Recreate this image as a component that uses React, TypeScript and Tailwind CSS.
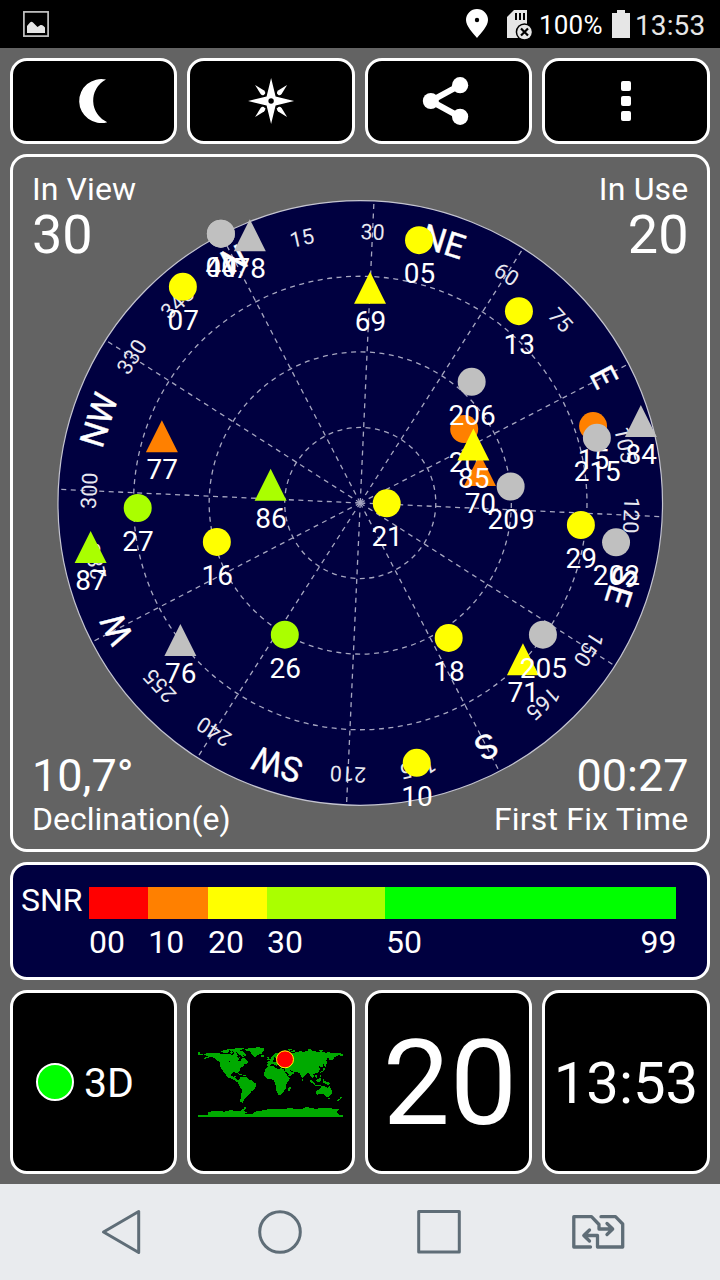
import React from "react";

type Shape = "circle" | "triangle";
type Satellite = [id: string, shape: Shape, x: number, y: number, color: string];

const YELLOW = "#ffff00";
const LIME = "#aaff00";
const ORANGE = "#ff8000";
const GRAY = "#c0c0c0";

const CX = 360.5;
const CY = 503;
const R = 302.5;
const HEADING = 27.4;

const satellites: Satellite[] = [
  ["04", "circle", 221, 233.5, GRAY],
  ["40", "circle", 221, 233.5, GRAY],
  ["78", "triangle", 250, 235, GRAY],
  ["05", "circle", 419.3, 240, YELLOW],
  ["07", "circle", 183, 286.7, YELLOW],
  ["69", "triangle", 370.3, 287.7, YELLOW],
  ["13", "circle", 519.3, 311, YELLOW],
  ["20", "circle", 464.5, 429, ORANGE],
  ["206", "circle", 472, 381.7, GRAY],
  ["70", "triangle", 480.3, 470, ORANGE],
  ["85", "triangle", 473.7, 444.5, YELLOW],
  ["209", "circle", 511, 486.5, GRAY],
  ["15", "circle", 593.5, 426, ORANGE],
  ["215", "circle", 597.3, 437.8, GRAY],
  ["84", "triangle", 641.3, 421, GRAY],
  ["21", "circle", 387, 503.3, YELLOW],
  ["29", "circle", 581.3, 525, YELLOW],
  ["202", "circle", 616.5, 542.3, GRAY],
  ["71", "triangle", 523.3, 659.3, YELLOW],
  ["205", "circle", 543.3, 634.8, GRAY],
  ["18", "circle", 449, 638, YELLOW],
  ["10", "circle", 417, 763, YELLOW],
  ["26", "circle", 285, 634.8, LIME],
  ["16", "circle", 217, 542, YELLOW],
  ["76", "triangle", 180.5, 640, GRAY],
  ["86", "triangle", 270.8, 484.7, LIME],
  ["27", "circle", 137.8, 508, LIME],
  ["87", "triangle", 90.7, 547, LIME],
  ["77", "triangle", 162, 436.3, ORANGE],
];

const marks = [
  "N", "15", "30", "NE", "60", "75", "E", "105", "120", "SE", "150", "165",
  "S", "195", "210", "SW", "240", "255", "W", "285", "300", "NW", "330", "345",
];

const spokes = [0, 30, 60, 90, 120, 150, 180, 210, 240, 270, 300, 330];

const scale = [
  { label: "00", cls: "w-[59.3px] bg-[#ff0000]" },
  { label: "10", cls: "w-[59.7px] bg-[#ff8000]" },
  { label: "20", cls: "w-[59px] bg-[#ffff00]" },
  { label: "30", cls: "w-[118px] bg-[#aaff00]" },
  { label: "50", cls: "w-[291.5px] bg-[#00ff00]" },
];

const card = "rounded-[17px] border-[3px] border-white overflow-hidden";

function StatusBar() {
  return (
    <header className="flex h-12 shrink-0 items-center bg-black text-[#e6e6e6]">
      <svg className="ml-[23px]" width="26" height="26" viewBox="23 11 26 26">
        <rect x="23.9" y="11.9" width="24.2" height="24.2" fill="none" stroke="#c6c6c6" strokeWidth="1.7" />
        <path d="M27 33V26L30 22.5Q31.500 21 33 22.500L37.500 27L40.500 25Q42 24.500 43.500 26L45 27.500V33Z" fill="#e6e6e6" />
      </svg>
      <svg className="ml-[417px]" width="22" height="48" viewBox="466 0 22 48">
        <path d="M477 9a11 11 0 0 0-11 11c0 6 7 13 11 18 4-5 11-12 11-18a11 11 0 0 0-11-11Z" fill="#fff" />
        <circle cx="477" cy="20" r="2.200" fill="#000" />
      </svg>
      <svg className="ml-[19px]" width="26" height="48" viewBox="507 0 26 48">
        <path d="M507 17L514 10H527V38H507Z" fill="#e6e6e6" />
        <path d="M516 13v7M520 13v7M524 13v7" stroke="#000" strokeWidth="2" />
        <circle cx="524.500" cy="32" r="8.800" fill="#000" />
        <circle cx="524.500" cy="32" r="7.300" fill="#e6e6e6" />
        <path d="M521 28.500l7 7M528 28.500l-7 7" stroke="#000" strokeWidth="2.200" />
      </svg>
      <span className="ml-[6px] mt-[2px] w-[73px] text-[26px] leading-[30px] tracking-[0.2px] text-white">100%</span>
      <svg width="18" height="48" viewBox="612 0 18 48">
        <path d="M612 13h5v-3h8v3h5v25h-18Z" fill="#e6e6e6" />
      </svg>
      <span className="ml-[5px] mt-[3px] text-[28px] leading-[30px] tracking-[0.1px]">13:53</span>
    </header>
  );
}

function Toolbar() {
  return (
    <div className="grid h-[86px] shrink-0 grid-cols-4 gap-[10.3px]">
      <button className={`${card} flex items-center justify-center bg-black`}>
        <svg width="161" height="80" viewBox="13 61 161 80">
          <path d="M106 79.600A22 22 0 1 0 107.300 122.200A23.600 23.600 0 0 1 106 79.600Z" fill="#fff" />
        </svg>
      </button>
      <button className={`${card} flex items-center justify-center bg-black`}>
        <svg width="161" height="80" viewBox="190.900 61 161 80">
          <g transform="translate(271 101)" fill="#fff">
            <path d="M0-23L4.500-4.500L23 0L4.500 4.500L0 23L-4.500 4.500L-23 0L-4.500-4.500Z" />
            {[0, 90, 180, 270].map((a) => (
              <path key={a} transform={`rotate(${a})`} d="M-16-16L-7-10.500Q-5.300-9-6-7.300L-7.300-6Q-9-5.300-10.500-7Z" />
            ))}
            <circle r="2.700" fill="#000" />
          </g>
        </svg>
      </button>
      <button className={`${card} flex items-center justify-center bg-black`}>
        <svg width="161" height="80" viewBox="368.200 61 161 80">
          <path d="M460.300 85.200L431 101L460.300 117" fill="none" stroke="#fff" strokeWidth="6" />
          <g fill="#fff">
            <circle cx="431" cy="101" r="8" />
            <circle cx="460.300" cy="85.200" r="8.100" />
            <circle cx="460.300" cy="116.800" r="8.100" />
          </g>
        </svg>
      </button>
      <button className={`${card} flex flex-col items-center justify-center gap-[5px] bg-black`}>
        <i className="h-[10px] w-[10px] rounded-[2px] bg-white" />
        <i className="h-[10px] w-[10px] rounded-[2px] bg-white" />
        <i className="h-[10px] w-[10px] rounded-[2px] bg-white" />
      </button>
    </div>
  );
}

function SkyPlot() {
  return (
    <svg className="absolute inset-0 h-full w-full" viewBox="13 157 694 692" fontFamily="Roboto, sans-serif" textAnchor="middle" fill="#fff">
      <circle cx={CX} cy={CY} r={R} fill="#000040" stroke="#c4c4d0" strokeWidth="1.200" />
      <g fill="none" stroke="#a6a6c0" strokeWidth="1.300" strokeDasharray="5 4.500">
        {[75.6, 151.2, 226.9].map((r) => (
          <circle key={r} cx={CX} cy={CY} r={r} />
        ))}
        {spokes.map((a) => (
          <line key={a} x1={CX} y1={CY} x2={CX} y2={CY - R} transform={`rotate(${a - HEADING} ${CX} ${CY})`} />
        ))}
      </g>
      {marks.map((m, i) => {
        const cardinal = /[NESW]/.test(m);
        return (
          <text
            key={m}
            x={CX}
            y={CY - (cardinal ? 262.5 : 264)}
            fontSize={cardinal ? 34 : 21.5}
            fill={cardinal ? "#ffffff" : "#e8e8f0"}
            stroke={cardinal ? "#ffffff" : "none"}
            strokeWidth={0.4}
            transform={`rotate(${i * 15 - HEADING} ${CX} ${CY})`}
          >
            {m}
          </text>
        );
      })}
      {satellites.map(([id, shape, x, y, color]) => (
        <g key={id}>
          {shape === "circle" ? (
            <circle cx={x} cy={y} r="14" fill={color} />
          ) : (
            <path d={`M${x} ${y - 16}l16 32h-32Z`} fill={color} />
          )}
          <text x={x + 0.4} y={y + 43} fontSize="28">{id}</text>
        </g>
      ))}
    </svg>
  );
}

function SkyPanel() {
  return (
    <section className={`${card} relative mt-[10px] h-[698px] shrink-0`}>
      <SkyPlot />
      <div className="relative flex h-full flex-col justify-between pb-3 pl-[19px] pr-[18px] pt-[14px]">
        <div className="flex justify-between">
          <div>
            <div className="text-[32px] leading-[36px] tracking-[0.1px]">In View</div>
            <div className="mt-px text-[54px] leading-[54px]">30</div>
          </div>
          <div className="text-right">
            <div className="text-[32px] leading-[36px] tracking-[0.2px]">In Use</div>
            <div className="mt-px text-[54px] leading-[54px]">20</div>
          </div>
        </div>
        <div className="flex justify-between">
          <div>
            <div className="mb-px text-[45px] leading-[48px]">10,7°</div>
            <div className="text-[32px] leading-[36px]">Declination(e)</div>
          </div>
          <div className="text-right">
            <div className="mb-px text-[45px] leading-[48px]">00:27</div>
            <div className="text-[32px] leading-[36px] tracking-[0.2px]">First Fix Time</div>
          </div>
        </div>
      </div>
    </section>
  );
}

function SnrPanel() {
  return (
    <section className={`${card} mt-[10px] flex h-[118px] shrink-0 bg-[#000040] pl-[8px] pt-[22px] text-[32px]`}>
      <div className="w-[68px] text-[32px] leading-[27px]">SNR</div>
      <div className="w-[587.5px]">
        <div className="flex h-8">
          {scale.map((s) => (
            <div key={s.label} className={s.cls} />
          ))}
        </div>
        <div className="mt-[5px] flex leading-[36px]">
          <span className="w-[59.3px]">00</span>
          <span className="w-[59.7px]">10</span>
          <span className="w-[59px]">20</span>
          <span className="w-[119px]">30</span>
          <span>50</span>
          <span className="ml-auto">99</span>
        </div>
      </div>
    </section>
  );
}

function WorldMap() {
  return (
    <svg className="-ml-[2px]" width="145" height="72" viewBox="39 50 435 216" fill="#00aa00" shapeRendering="crispEdges">
      <path d="M39 68h5v7h9v3H39ZM57 75L66 71L80 70L98 72L110 73L125 74L138 75L143 78L148 69L156 70L158 79L165 83L161 88L160 94L166 97L169 88L177 85L184 92L190 96L186 103L178 105L174 111L166 117L164 124L158 129L157 136L154 130L145 129L139 133L139 140L146 142L151 138L154 142L150 146L157 150L160 157L167 160L161 162L153 156L143 149L132 146L126 141L121 133L115 126L108 119L106 109L105 101L98 94L87 85L77 83L68 86L57 89L61 84L69 81Z" />
      <path d="M107 66l9-4h13l4 4-7 5-12-1ZM121 62l14-4 12 2-8 4ZM139 63l11-6 15-2h18l-10 5-10 2 9 4 8 7 5 7-9-2-9-8-9-3-12 1ZM132 68l9-2 5 5-8 3ZM151 65l10 1 11 8 7 9-5 2-8-7-8-6Z" />
      <path d="M176 59L193 57L204 55L222 54L238 58L235 66L229 74L220 76L210 83L205 81L200 74L194 66L185 64ZM229 78h9v5h-9ZM157 132l8 1 8 4-6 1ZM174 138h8v3h-8ZM183 94l7 3-2 5-7-2Z" />
      <path d="M165 145L174 141L181 144L188 145L193 151L201 153L207 160L215 164L211 174L207 181L200 185L196 193L190 198L185 203L179 207L177 214L173 218L177 221L167 219L165 212L168 204L169 193L171 181L164 172L159 162L160 154Z" />
      <path d="M247 98L254 94L258 85L264 80L268 73L277 70L287 70L292 76L308 74L320 72L336 68L347 65L352 67L366 66L372 62L379 60L382 65L396 67L410 69L430 70L448 71L474 73L474 80L460 78L449 83L444 90L435 94L432 88L427 86L424 94L427 101L420 107L414 105L415 112L408 113L403 111L404 121L400 130L391 132L385 135L388 142L382 147L377 140L374 136L371 132L366 132L357 140L354 148L348 140L345 132L333 128L326 126L328 131L319 137L311 142L305 133L300 125L301 117L292 116L286 113L280 106L275 110L267 105L258 105L252 110L246 109L248 102Z" />
      <path d="M248 112L257 110L269 112L270 116L279 118L289 117L297 120L300 128L308 141L313 145L316 145L311 155L303 165L302 177L297 185L291 195L280 197L276 189L273 178L271 163L266 153L258 149L246 148L239 141L237 131L241 121Z" />
      <path d="M246 84l6-3 2 10-6 3-3-5 3-1ZM229 77h9v4h-9ZM302 62l12-3 9 1-8 4ZM315 65l14-2 3 3-11 3ZM365 58l11 1 3 4-7 1ZM398 64l12-2 9 3-11 2ZM427 67h9v3h-9ZM309 176l6-5 3 3-4 12-5-1ZM418 91l4 9 1 12h-4l-2-10ZM415 115l7 4-5 5-6 4-5 0 7-4ZM404 127h4v3h-4ZM390 136l7 3-1 8-5-3ZM374 149l8 5 6 7 4 7-5-2-10-8ZM391 152l8-3 7-5 3 7-5 8-9-2ZM390 168h17v3h-17ZM413 151l4-2 2 9-4 3ZM416 156l12 1 10 7-10 3-10-5ZM408 170h7v3h-7ZM403 136l5 1 1 7-5-4Z" />
      <path d="M394 185L402 180L408 174L417 171L425 172L429 177L433 170L437 178L442 187L438 196L431 203L423 202L417 196L408 192L398 196L393 193ZM429 205h6v5h-5ZM464 201l7 4-5 3ZM462 208l3 1-5 6h-4ZM351 148h4v6h-4Z" />
      <path d="M39 257H474V264H39ZM68 258V250L80 246L103 245L117 247L135 243L153 244L167 246L172 239L182 236L184 239L174 245L188 248L187 251L173 254L202 253L211 247L229 244L250 240L274 238L302 238L322 236L331 240L353 238L361 234L382 235L391 239L413 235L435 236L449 240L463 240L456 248L462 257V260H68ZM176 234h8v3h-8Z" />
      <g fill="#000">
        <path d="M281 99l5-3 7 1 5 4-4 2-9-1ZM302 96h5v10h-5ZM266 85l5-3 1 9 7 4-4 4-10-1ZM300 124l5 3 7 9-3 2ZM312 121l9 4 4 3-8-1ZM158 78l5 2-2 5-5-2ZM129 94l6 2-3 2ZM138 109h7v2h-7Z" />
      </g>
      <circle cx="300" cy="90" r="25.500" fill="#ff0000" stroke="#ffff00" strokeWidth="3" shapeRendering="auto" />
    </svg>
  );
}

function Tiles() {
  return (
    <div className="mt-[10px] grid h-[184px] shrink-0 grid-cols-4 gap-[10.3px]">
      <div className={`${card} flex items-center bg-black pl-[23px]`}>
        <i className="h-[38px] w-[38px] shrink-0 rounded-full border-2 border-white bg-[#00ff00]" />
        <span className="ml-[10px] mt-[2px] text-[41px] leading-[48px]">3D</span>
      </div>
      <div className={`${card} flex items-center justify-center bg-black`}>
        <WorldMap />
      </div>
      <div className={`${card} flex items-center justify-center bg-black pl-[3px] pt-[2px] text-[119.500px] leading-[120px]`}>20</div>
      <div className={`${card} flex items-center justify-center bg-black pt-[2px] text-[58px] leading-[60px]`}>13:53</div>
    </div>
  );
}

function NavBar() {
  return (
    <nav className="flex h-24 shrink-0 items-center bg-[#e9ebee]">
      <svg className="ml-[100px]" width="42" height="50" viewBox="100 1207 42 50" fill="none" stroke="#5f6d77" strokeWidth="3" strokeLinejoin="round">
        <path d="M103.500 1232L138.700 1211.500V1252.500Z" />
      </svg>
      <svg className="ml-[113px]" width="50" height="50" viewBox="255 1207 50 50" fill="none" stroke="#5f6d77" strokeWidth="3">
        <circle cx="280" cy="1232" r="20.300" />
      </svg>
      <svg className="ml-[109px]" width="50" height="50" viewBox="414 1207 50 50" fill="none" stroke="#5f6d77" strokeWidth="3" strokeLinejoin="round">
        <rect x="418.700" y="1211.500" width="40.600" height="40.600" />
      </svg>
      <svg className="ml-[106px]" width="56" height="50" viewBox="570 1207 56 50" fill="none" stroke="#5f6d77" strokeWidth="3.300" strokeLinecap="round" strokeLinejoin="round">
        <path d="M590.500 1247H573.800V1216.700H591.500L599 1224.500V1229H612.500M607 1223.500L612.700 1229L607 1234.500" />
        <path d="M601 1216.700H615.500L622.700 1224V1247H597.500V1235.500H584M589.500 1230L583.800 1235.500L589.500 1241" />
      </svg>
    </nav>
  );
}

export default function App() {
  return (
    <div className="flex h-[1280px] w-[720px] flex-col overflow-hidden bg-[#636363] font-[Roboto,sans-serif] text-white">
      <StatusBar />
      <main className="flex flex-1 flex-col pl-[10px] pr-[10.500px] pt-[10px]">
        <Toolbar />
        <SkyPanel />
        <SnrPanel />
        <Tiles />
      </main>
      <NavBar />
    </div>
  );
}
